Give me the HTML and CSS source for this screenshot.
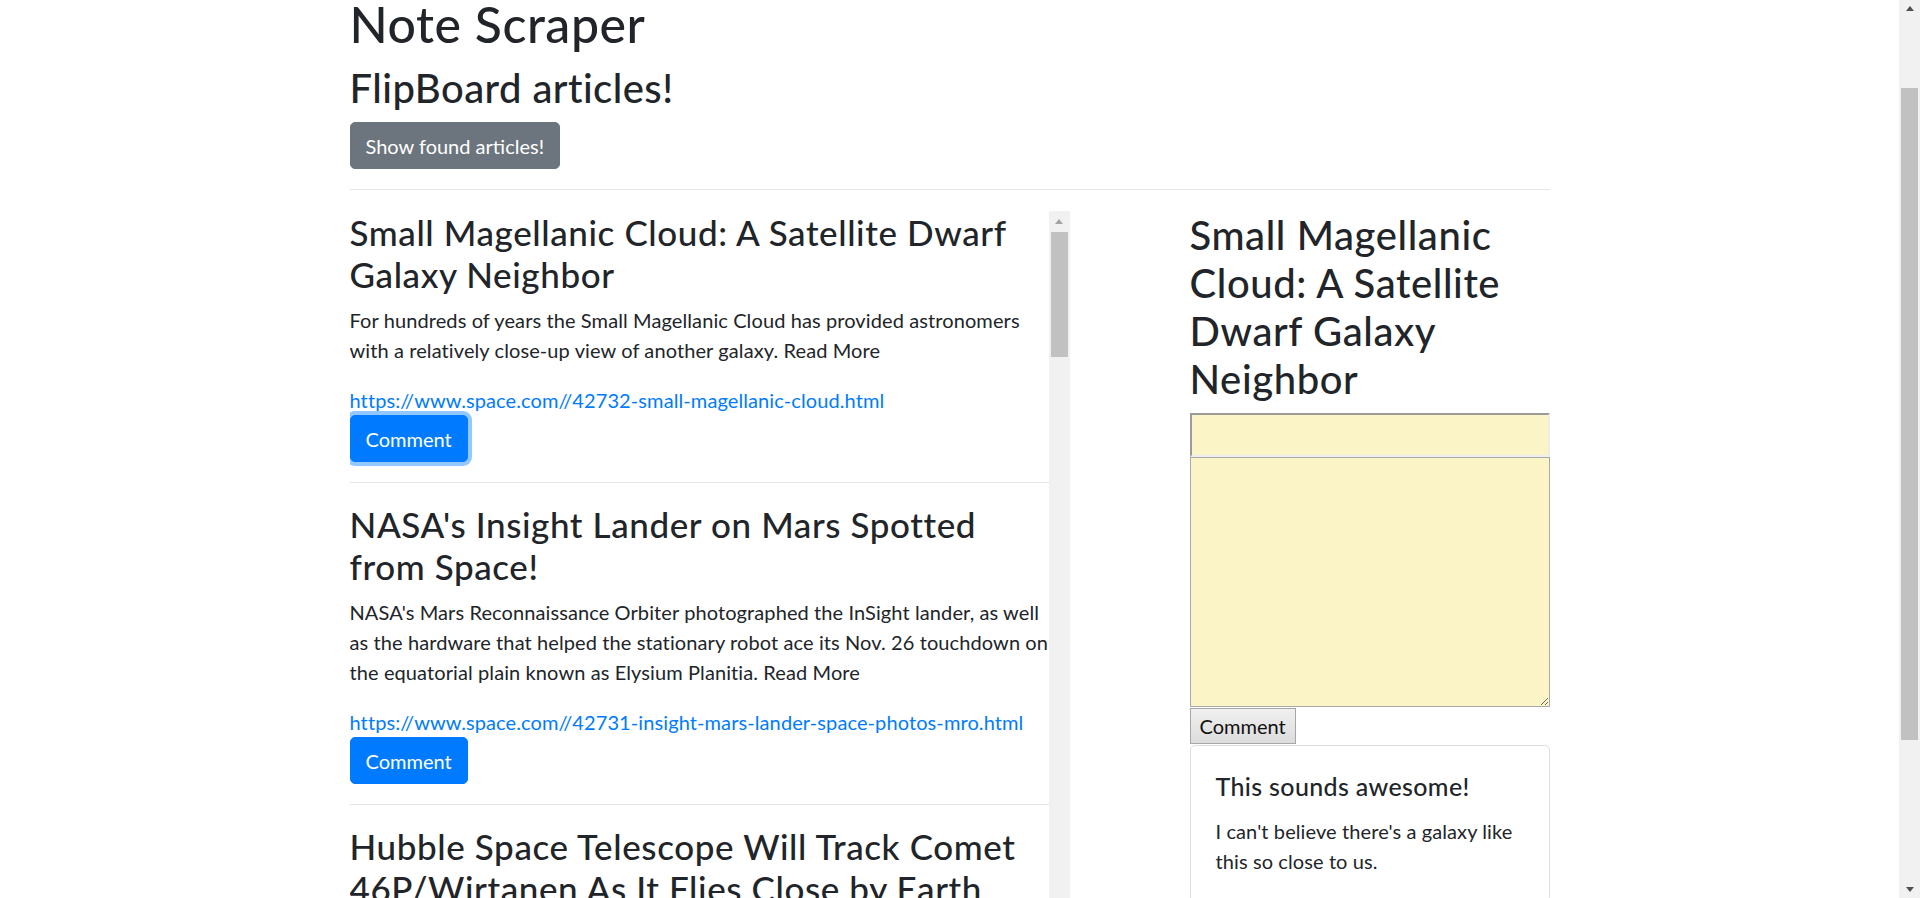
FILE: index.html
```html
<!DOCTYPE html>
<html lang="en">
<head>
<meta charset="utf-8">
<title>Note Scraper</title>
<link rel="stylesheet" href="styles.css">
</head>
<body>
<div class="viewport">
  <main class="page">
    <div class="container">
      <header class="masthead">
        <h1 class="site-title">Note Scraper</h1>
        <h2 class="site-subtitle">FlipBoard articles!</h2>
        <button class="btn btn-secondary" type="button">Show found articles!</button>
      </header>
      <hr class="rule rule-top">
      <div class="columns">
        <section class="feed">
          <div class="feed-list">
            <article class="article">
              <h3 class="article-title">Small Magellanic Cloud: A Satellite Dwarf Galaxy Neighbor</h3>
              <p class="article-summary">For hundreds of years the Small Magellanic Cloud has provided astronomers with a relatively close-up view of another galaxy. Read More</p>
              <a class="article-link" href="#">https://www.space.com//42732-small-magellanic-cloud.html</a>
              <button class="btn btn-primary btn-focus" type="button">Comment</button>
            </article>
            <hr class="rule">
            <article class="article">
              <h3 class="article-title">NASA's Insight Lander on Mars Spotted from Space!</h3>
              <p class="article-summary">NASA's Mars Reconnaissance Orbiter photographed the InSight lander, as well as the hardware that helped the stationary robot ace its Nov. 26 touchdown on the equatorial plain known as Elysium Planitia. Read More</p>
              <a class="article-link" href="#">https://www.space.com//42731-insight-mars-lander-space-photos-mro.html</a>
              <button class="btn btn-primary" type="button">Comment</button>
            </article>
            <hr class="rule">
            <article class="article">
              <h3 class="article-title">Hubble Space Telescope Will Track Comet 46P/Wirtanen As It Flies Close by Earth</h3>
            </article>
          </div>
          <div class="vscroll">
            <div class="vscroll-btn"><span class="arrow arrow-up"></span></div>
            <div class="thumb"></div>
            <div class="track-rest"></div>
          </div>
        </section>
        <aside class="notes">
          <h2 class="note-heading">Small Magellanic Cloud: A Satellite Dwarf Galaxy Neighbor</h2>
          <input class="note-title-input" type="text" aria-label="Title">
          <textarea class="note-body" aria-label="Comment"></textarea>
          <button class="note-submit" type="button">Comment</button>
          <div class="comment-card">
            <h5 class="comment-title">This sounds awesome!</h5>
            <p class="comment-text">I can't believe there's a galaxy like this so close to us.</p>
          </div>
        </aside>
      </div>
    </div>
  </main>
  <div class="vscroll page-bar">
    <div class="vscroll-btn page-btn-up"><span class="arrow arrow-up"></span></div>
    <div class="thumb"></div>
    <div class="track-rest"></div>
    <div class="vscroll-btn page-btn-down"><span class="arrow arrow-down"></span></div>
  </div>
</div>
</body>
</html>
```
FILE: styles.css
```css
* {
  box-sizing: border-box;
}

html,
body {
  margin: 0;
  height: 100%;
  overflow: hidden;
}

body {
  font-family: Lato, "Liberation Sans", sans-serif;
  font-size: 20px;
  line-height: 30px;
  letter-spacing: 0.1px;
  color: #212529;
  background: #fff;
}

.viewport {
  display: flex;
  height: 898px;
}

.page {
  flex: 1;
  min-width: 0;
  overflow: hidden;
}

.container {
  width: 1200px;
  margin: 0 auto;
}

.site-title {
  margin: -6px 0 10px;
  font-size: 50px;
  line-height: 60px;
  font-weight: 500;
  letter-spacing: 0.55px;
}

.site-subtitle {
  margin: 0 0 10px;
  font-size: 40px;
  line-height: 48px;
  font-weight: 500;
  letter-spacing: 0.45px;
}

.btn {
  display: inline-block;
  margin: 0;
  padding: 7.5px 15px;
  font-family: inherit;
  font-size: 20px;
  line-height: 30px;
  letter-spacing: 0;
  color: #fff;
  border: 1px solid transparent;
  border-radius: 5px;
  cursor: pointer;
}

.btn-secondary {
  background: #6c757d;
  border-color: #6c757d;
}

.btn-primary {
  background: #007bff;
  border-color: #007bff;
}

.btn-focus {
  box-shadow: 0 0 0 4px rgba(38, 143, 255, 0.5);
}

.rule {
  height: 0;
  margin: 20px 0;
  border: 0;
  border-top: 1px solid rgba(0, 0, 0, 0.1);
}

.rule-top {
  margin-bottom: 21px;
}

.columns {
  display: flex;
  justify-content: space-between;
  align-items: flex-start;
}

.feed {
  display: flex;
  width: 720px;
  height: 720px;
}

.feed-list {
  width: 699px;
  flex: none;
  overflow: hidden;
}

.article-title {
  margin: 0 0 10px;
  font-size: 35px;
  line-height: 42px;
  font-weight: 500;
  letter-spacing: 0.6px;
}

.article-summary {
  margin: 0 0 20px;
}

.article-link {
  display: block;
  color: #007bff;
  text-decoration: none;
}

/* scrollbars */
.vscroll {
  display: flex;
  flex-direction: column;
  flex: none;
  width: 21px;
  background: #f1f1f1;
}

.vscroll-btn {
  display: flex;
  justify-content: center;
  align-items: center;
  flex: none;
  height: 21px;
}

.arrow {
  width: 0;
  height: 0;
  border-left: 4.5px solid transparent;
  border-right: 4.5px solid transparent;
}

.arrow-up {
  border-bottom: 5px solid #a3a3a3;
}

.arrow-down {
  border-top: 5px solid #505050;
}

.thumb {
  flex: none;
  height: 125px;
  margin: 0 2px;
  background: #c1c1c1;
}

.track-rest {
  flex: 1;
}

.page-bar {
  height: 898px;
}

.page-bar .arrow-up {
  border-bottom-color: #505050;
}

.page-btn-up {
  align-items: flex-start;
  padding-top: 6px;
}

.page-btn-down {
  align-items: flex-end;
  padding-bottom: 6px;
}

.page-bar .thumb {
  height: 652px;
  margin-top: 67px;
}

/* right column */
.notes {
  width: 360px;
  flex: none;
}

.note-heading {
  margin: 0 0 10px;
  font-size: 40px;
  line-height: 48px;
  font-weight: 500;
  letter-spacing: 0.6px;
}

.note-title-input {
  display: block;
  width: 100%;
  height: 44px;
  margin: 0;
  padding: 1px 2px;
  font: inherit;
  background: #fbf4c7;
  border: 2px solid;
  border-color: #9b9b9b #ededed #ededed #9b9b9b;
  outline: none;
}

.note-body {
  display: block;
  width: 100%;
  height: 250px;
  margin: 0;
  padding: 2px;
  font: inherit;
  background: #fbf4c7;
  border: 1px solid #a9a9a9;
  resize: both;
  outline: none;
}

.note-submit {
  display: block;
  margin: 1px 0 0;
  padding: 2px 9px;
  font-family: inherit;
  font-size: 20px;
  line-height: 30px;
  letter-spacing: 0;
  color: #111;
  background: linear-gradient(#f0f0f0, #dcdcdc);
  border: 1px solid #a6a6a6;
  border-radius: 0;
}

.comment-card {
  margin-top: 1px;
  padding: 25px;
  border: 1px solid rgba(0, 0, 0, 0.125);
  border-radius: 5px;
}

.comment-title {
  margin: 0 0 15px;
  font-size: 25px;
  line-height: 30px;
  font-weight: 500;
  letter-spacing: 0.35px;
}

.comment-text {
  margin: 0;
}
```
